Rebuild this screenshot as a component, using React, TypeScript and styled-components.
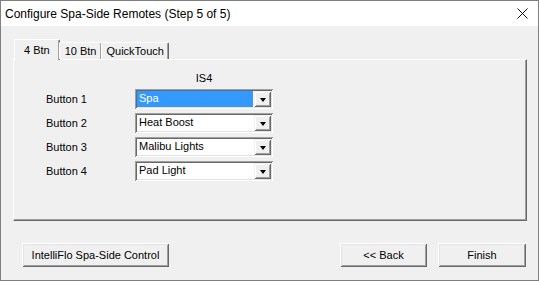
import React from 'react'
import styled, { createGlobalStyle } from 'styled-components'

const GlobalStyle = createGlobalStyle`
    html, body {
        margin: 0;
        padding: 0;
        background: #f0f0f0;
    }
    * {
        box-sizing: border-box;
    }
`

const Window = styled.div`
    width: 539px;
    height: 281px;
    border: 1px solid #7f7f7f;
    background: #f0f0f0;
    display: flex;
    flex-direction: column;
    font-family: 'Liberation Sans', Arial, sans-serif;
    font-size: 11px;
    color: #000;
`

const TitleBar = styled.div`
    height: 25px;
    background: #fff;
    display: flex;
    align-items: center;
    justify-content: space-between;
    padding: 0 10px 0 4px;
`

const Title = styled.div`
    font-family: 'Liberation Sans', Arial, sans-serif;
    font-size: 12px;
`

const CloseIcon = () => (
    <svg width="11" height="11" viewBox="0 0 11 11">
        <path d="M0.5 0.5 L10.5 10.5 M10.5 0.5 L0.5 10.5" stroke="#111" strokeWidth="1" />
    </svg>
)

const Body = styled.div`
    flex: 1;
    display: flex;
    flex-direction: column;
    padding: 14px 12px 0 12px;
`

const TabStrip = styled.div`
    display: flex;
    align-items: flex-end;
    height: 19px;
    padding-left: 1px;
    position: relative;
    z-index: 2;
`

type ITab = {
    active?: boolean
}
const Tab = styled.div<ITab>`
    height: ${(props) => (props.active ? '21px' : '17px')};
    margin-bottom: ${(props) => (props.active ? '-1px' : '0')};
    padding: ${(props) => (props.active ? '4px 9px 0 9px' : '2px 4px 0 5px')};
    margin-left: ${(props) => (props.active ? '0' : '-1px')};
    background: #f0f0f0;
    border-top: 1px solid #fff;
    border-left: 1px solid #fff;
    border-right: 1px solid #696969;
    box-shadow: inset -1px 0 #a0a0a0;
    border-radius: 2px 2px 0 0;
    white-space: nowrap;
`

const Panel = styled.div`
    width: 514px;
    height: 162px;
    border-top: 1px solid #fff;
    border-left: 1px solid #fff;
    border-right: 1px solid #696969;
    border-bottom: 1px solid #696969;
    box-shadow: inset -1px -1px #a0a0a0;
    padding: 11px 0 0 31px;
`

const Grid = styled.div`
    display: grid;
    grid-template-columns: 90px 138px;
    grid-template-rows: 14px repeat(4, 20px);
    row-gap: 4px;
    align-items: center;
`

const Header = styled.div`
    grid-column: 2;
    text-align: center;
`

const Label = styled.div`
    padding-left: 1px;
`

const Combo = styled.div`
    height: 20px;
    background: #fff;
    padding: 2px;
    display: flex;
    box-shadow: inset 1px 1px #a0a0a0, inset -1px -1px #fff, inset 2px 2px #696969,
        inset -2px -2px #e3e3e3;
`

type IValue = {
    selected?: boolean
}
const ComboValue = styled.div<IValue>`
    flex: 1;
    padding: 1px 0 0 2px;
    background: ${(props) => (props.selected ? '#3399ff' : '#fff')};
    color: ${(props) => (props.selected ? '#fff' : '#000')};
    margin-right: 1px;
`

const DropButton = styled.div`
    width: 17px;
    background: #f0f0f0;
    display: flex;
    align-items: center;
    justify-content: center;
    box-shadow: inset 1px 1px #f0f0f0, inset -1px -1px #696969, inset 2px 2px #fff,
        inset -2px -2px #a0a0a0;
`

const Arrow = styled.div`
    width: 0;
    height: 0;
    border-left: 3.5px solid transparent;
    border-right: 3.5px solid transparent;
    border-top: 4px solid #000;
    margin-top: 1px;
`

const ButtonRow = styled.div`
    display: flex;
    padding: 22px 0 0 9px;
    gap: 11px;
`

type IButton = {
    w: number
}
const Button = styled.div<IButton>`
    width: ${(props) => props.w}px;
    height: 24px;
    display: flex;
    align-items: center;
    justify-content: center;
    background: #f0f0f0;
    box-shadow: inset 1px 1px #fff, inset -1px -1px #696969, inset 2px 2px #e3e3e3,
        inset -2px -2px #a0a0a0;
    padding-bottom: 1px;
`

const Spacer = styled.div`
    flex: 1;
`

const rows = [
    { label: 'Button 1', value: 'Spa', selected: true },
    { label: 'Button 2', value: 'Heat Boost' },
    { label: 'Button 3', value: 'Malibu Lights' },
    { label: 'Button 4', value: 'Pad Light' },
]

export default function App() {
    return (
        <>
            <GlobalStyle />
            <Window>
                <TitleBar>
                    <Title>Configure Spa-Side Remotes (Step 5 of 5)</Title>
                    <CloseIcon />
                </TitleBar>
                <Body>
                    <TabStrip>
                        <Tab active>4 Btn</Tab>
                        <Tab>10 Btn</Tab>
                        <Tab>QuickTouch</Tab>
                    </TabStrip>
                    <Panel>
                        <Grid>
                            <Header>IS4</Header>
                            {rows.map((r) => (
                                <React.Fragment key={r.label}>
                                    <Label>{r.label}</Label>
                                    <Combo>
                                        <ComboValue selected={r.selected}>{r.value}</ComboValue>
                                        <DropButton>
                                            <Arrow />
                                        </DropButton>
                                    </Combo>
                                </React.Fragment>
                            ))}
                        </Grid>
                    </Panel>
                    <ButtonRow>
                        <Button w={147}>IntelliFlo Spa-Side Control</Button>
                        <Spacer />
                        <Button w={87}>&lt;&lt; Back</Button>
                        <Button w={88}>Finish</Button>
                    </ButtonRow>
                </Body>
            </Window>
        </>
    )
}
